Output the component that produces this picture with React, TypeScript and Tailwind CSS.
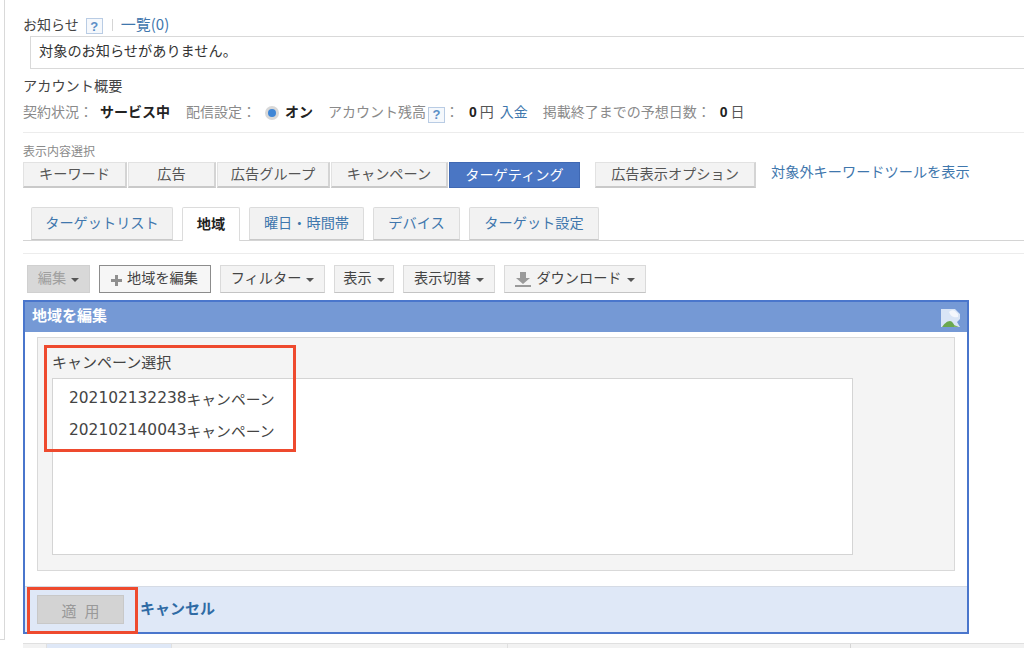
import React from "react";

const font = "font-['Noto_Sans_CJK_JP','Liberation_Sans',sans-serif]";

function HelpIcon({ className = "" }: { className?: string }) {
  return (
    <span
      className={`inline-flex items-center justify-center w-[17px] h-[16px] border border-[#b9cce4] bg-[#f5f8fc] text-[#5b8fc7] text-[13px] font-bold leading-none font-['Liberation_Sans',sans-serif] ${className}`}
    >
      ?
    </span>
  );
}

function Caret() {
  return <span className="ml-[5px] mt-[3px] w-0 h-0 border-x-[4px] border-x-transparent border-t-[4px] border-t-[#555]" />;
}

function TabButton({ label, width, active }: { label: string; width: string; active?: boolean }) {
  return (
    <div
      className={`${width} h-[26px] pb-[1px] flex items-center justify-center text-[14.2px] border ${
        active
          ? "bg-[#4a76c4] border-[#3f68b3] text-white"
          : "bg-[#f3f3f3] border-[#e2e2e2] border-b-2 border-b-[#c9c9c9] border-r-2 border-r-[#d4d4d4] text-[#555]"
      }`}
    >
      {label}
    </div>
  );
}

function SubTab({ label, width, active }: { label: string; width: string; active?: boolean }) {
  return (
    <div
      className={`${width} pb-[2px] flex items-center justify-center text-[14.2px] border border-[#dcdcdc] rounded-t-[2px] ${
        active
          ? "h-[34px] bg-white border-b-0 font-bold text-[#222] -mb-px relative"
          : "h-[33px] bg-[#f2f2f2] border-b-[#c9c9c9] text-[#3f77ad]"
      }`}
    >
      {label}
    </div>
  );
}

function ToolButton({
  width,
  children,
  variant,
}: {
  width: string;
  children: React.ReactNode;
  variant?: "disabled" | "outlined";
}) {
  const look =
    variant === "disabled"
      ? "bg-[#d8d8d8] border-[#d0d0d0] text-[#a0a0a0]"
      : variant === "outlined"
        ? "bg-[#f6f6f6] border-[#8c8c8c] text-[#444]"
        : "bg-[#f3f3f3] border-[#dadada] border-b-[#c4c4c4] text-[#444]";
  return (
    <div className={`${width} h-[28px] pb-[2px] flex items-center justify-center text-[14.2px] border ${look}`}>
      {children}
    </div>
  );
}

export default function App() {
  return (
    <div className={`relative w-[1024px] h-[648px] overflow-hidden bg-white text-[#444] ${font}`}>
      <div className="absolute left-0 top-0 w-[5px] h-[640px] border-r border-b border-[#d9d9d9]" />

      <div className="pl-[23px] pt-[15px]">
        <div className="flex items-center h-[20px] text-[14px]">
          <span className="-mt-[2px]">お知らせ</span>
          <HelpIcon className="ml-[7px] mt-[2px]" />
          <span className="ml-[9px] mr-[8px] w-px h-[12px] bg-[#d5d5d5]" />
          <span className="-mt-[2px] text-[15px] text-[#3f77ad]">一覧(0)</span>
        </div>
        <div className="ml-[7px] mt-[1px] h-[33px] pb-[4px] flex items-center pl-[8px] border border-r-0 border-[#d9d9d9] text-[14.2px] text-[#333]">
          対象のお知らせがありません。
        </div>

        <div className="mt-[9px] h-[20px] pb-[4px] flex items-center text-[14.2px]">アカウント概要</div>
        <div className="mt-[5px] h-[20px] flex items-center text-[14px] text-[#8a8a8a]">
          <span className="-mt-[4px]">契約状況：</span>
          <span className="-mt-[4px] ml-[7px] font-bold text-[#222]">サービス中</span>
          <span className="-mt-[4px] ml-[16px]">配信設定：</span>
          <span className="-mt-[1px] ml-[9px] w-[14px] h-[14px] rounded-full bg-[#d8d8d8] flex items-center justify-center">
            <span className="w-[8px] h-[8px] rounded-full bg-[#3f86d6]" />
          </span>
          <span className="-mt-[4px] ml-[6px] font-bold text-[#222]">オン</span>
          <span className="-mt-[4px] ml-[15px]">アカウント残高</span>
          <HelpIcon className="mt-[3px] ml-[2px]" />
          <span className="-mt-[4px]">：</span>
          <span className="ml-[10px] -mt-[1px] font-bold text-[#222] font-['Liberation_Sans',sans-serif]">0</span>
          <span className="-mt-[4px] ml-[3px] text-[#555]">円</span>
          <span className="-mt-[4px] ml-[6px] text-[#3f77ad]">入金</span>
          <span className="-mt-[4px] ml-[15px]">掲載終了までの予想日数：</span>
          <span className="ml-[9px] -mt-[1px] font-bold text-[#222] font-['Liberation_Sans',sans-serif]">0</span>
          <span className="-mt-[4px] ml-[3px] text-[#555]">日</span>
        </div>

        <div className="mt-[9px] h-px bg-[#ececec]" />

        <div className="mt-[11px] mb-[2px] h-[16px] pb-[2px] flex items-center text-[12px] text-[#8a8a8a]">表示内容選択</div>
        <div className="flex items-center h-[26px]">
          <div className="flex gap-px">
            <TabButton label="キーワード" width="w-[104px]" />
            <TabButton label="広告" width="w-[88px]" />
            <TabButton label="広告グループ" width="w-[113px]" />
            <TabButton label="キャンペーン" width="w-[117px]" />
            <TabButton label="ターゲティング" width="w-[131px]" active />
          </div>
          <div className="ml-[15px]">
            <TabButton label="広告表示オプション" width="w-[161px]" />
          </div>
          <span className="ml-[15px] -mt-[7px] text-[14.2px] text-[#3f77ad]">対象外キーワードツールを表示</span>
        </div>

        <div className="mt-[19px] pl-[8px] flex items-end gap-[9px] border-b border-[#d4d4d4] h-[34px]">
          <SubTab label="ターゲットリスト" width="w-[142px]" />
          <SubTab label="地域" width="w-[58px]" active />
          <SubTab label="曜日・時間帯" width="w-[115px]" />
          <SubTab label="デバイス" width="w-[87px]" />
          <SubTab label="ターゲット設定" width="w-[130px]" />
        </div>
        <div className="mt-[12px] h-px bg-[#ececec]" />

        <div className="mt-[11px] ml-[4px] flex gap-[9px]">
          <ToolButton width="w-[63px]" variant="disabled">
            編集
            <Caret />
          </ToolButton>
          <ToolButton width="w-[112px]" variant="outlined">
            <svg width="11" height="11" viewBox="0 0 11 11" className="mr-[5px] mt-[5px] -ml-[1px]">
              <path d="M4 0h3v4h4v3H7v4H4V7H0V4h4z" fill="#8f8f8f" />
            </svg>
            地域を編集
          </ToolButton>
          <ToolButton width="w-[105px]">
            フィルター
            <Caret />
          </ToolButton>
          <ToolButton width="w-[60px]">
            表示
            <Caret />
          </ToolButton>
          <ToolButton width="w-[92px]">
            表示切替
            <Caret />
          </ToolButton>
          <ToolButton width="w-[142px]">
            <svg width="16" height="15" viewBox="0 0 16 15" className="mr-[5px] mt-[3px]">
              <path d="M5 0h6v6h4l-7 6-7-6h4z" fill="#9a9a9a" />
              <rect x="0" y="13" width="16" height="2" fill="#9a9a9a" />
            </svg>
            ダウンロード
            <Caret />
          </ToolButton>
        </div>

        <div className="mt-[7px] w-[946px] h-[334px] border-2 border-[#4a76cc] flex flex-col">
          <div className="h-[30px] shrink-0 pb-[4px] flex items-center justify-between px-[7px] bg-[#7599d5] text-white text-[15px] font-bold">
            <span>地域を編集</span>
            <svg width="19" height="18" viewBox="0 0 19 18" className="mt-[5px]">
              <path d="M0 0h14l5 5v5l-3 3 3 5H0z" fill="#d9e5f6" />
              <path d="M8 3c2-2 5-2 6-1l3 3v3c-3 1-7 0-9-5z" fill="#f4f7fc" />
              <path d="M1 18c2-3 5-6 8-6 2 0 4 3 5 6z" fill="#6aa84f" />
              <path d="M13 16l5 2h-5z" fill="#7fb561" />
            </svg>
          </div>
          <div className="px-[12px] pt-[5px] flex-1">
            <div className="h-[234px] border border-[#d9d9d9] bg-[#f4f4f4] pl-[14px] pt-[15px]">
              <div className="h-[25px] text-[15px] leading-[20px] -mt-[1px] mb-[1px] text-[#444]">キャンペーン選択</div>
              <div className="w-[801px] h-[177px] border border-[#d4d4d4] bg-white pl-[16px] pt-[4px] text-[14.8px] text-[#444]">
                <div className="h-[32px] flex items-center">
                  <span className="font-['DejaVu_Sans',sans-serif] text-[15.4px]">202102132238</span>
                  <span>キャンペーン</span>
                </div>
                <div className="h-[32px] flex items-center">
                  <span className="font-['DejaVu_Sans',sans-serif] text-[15.4px]">202102140043</span>
                  <span>キャンペーン</span>
                </div>
              </div>
            </div>
          </div>
          <div className="h-[46px] shrink-0 flex items-center pl-[12px] bg-[#dfe8f7] border-t border-[#d5dbe5]">
            <div className="w-[87px] h-[29px] pt-[3px] flex items-center justify-center gap-[8px] bg-[#d3d3d3] border border-[#c8c8c8] text-[15px] text-[#999]">
              <span>適</span>
              <span>用</span>
            </div>
            <span className="ml-[16px] pb-[2px] text-[15px] font-bold text-[#2f6ba5]">キャンセル</span>
          </div>
        </div>

        <div className="mt-[9px] h-[10px] flex border-t border-[#e0e0e0] bg-[#f2f2f2]">
          <div className="w-[24px] border-r border-[#e0e0e0]" />
          <div className="w-[125px] bg-[#dfe8f7] border-r border-[#e0e0e0]" />
          <div className="w-[336px] border-r border-[#e0e0e0]" />
          <div className="w-[343px] border-r border-[#d5d5d5]" />
        </div>
      </div>

      <div className="absolute left-[44px] top-[345px] w-[252px] h-[107px] border-[3px] border-[#ee4a2e]" />
      <div className="absolute left-[27px] top-[587px] w-[111px] h-[47px] border-[3px] border-[#ee4a2e]" />
    </div>
  );
}
